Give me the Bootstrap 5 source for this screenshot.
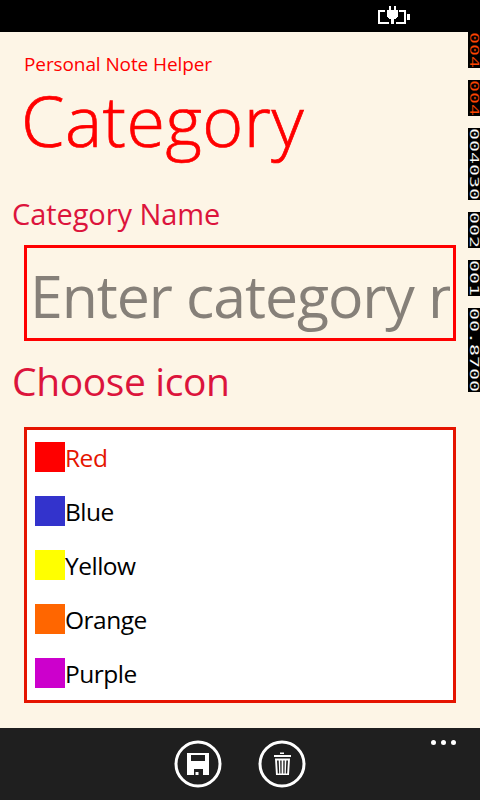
<!DOCTYPE html>
<html lang="en">
<head>
<meta charset="utf-8">
<meta name="viewport" content="width=device-width, initial-scale=1">
<title>Personal Note Helper</title>
<link href="https://cdn.jsdelivr.net/npm/bootstrap@5.3.0/dist/css/bootstrap.min.css" rel="stylesheet">
<style>
body{width:480px;height:800px;background:#fdf5e6;font-family:"Open Sans","Noto Sans",sans-serif;color:#000}
.status{height:32px;background:#000}
.battery{margin:6px 0 0 378px}
.app-name{margin:20px 0 0 24px;font-size:19px;line-height:24px;color:#f00;letter-spacing:-.1px}
.page-title{margin:4px 0 0 21px;font-size:70px;font-weight:300;line-height:80px;color:#f00;letter-spacing:.5px;-webkit-text-stroke:.7px #f00}
.lbl{margin-left:12px;color:#dc143c;white-space:nowrap}
.lbl-name{margin-top:34px;font-size:29px;line-height:40px;letter-spacing:-.08px}
.lbl-icon{margin-top:15px;font-size:39px;line-height:50px;letter-spacing:-.4px}
.name-input{width:432px;height:96px;margin:11px 0 0 24px;border:3px solid #f00;background:transparent;padding:4px 3px 0 3px;font-size:59px;line-height:80px;letter-spacing:-1.080px;outline:0}
.name-input::placeholder{color:#868079;opacity:1}
.icons{width:432px;height:276px;margin:21px 0 0 24px;border:3px solid #e51400;background:#fff;padding:12px 8px 0;overflow:hidden}
.icons li{height:30px;margin-bottom:24px;font-size:24.5px;line-height:32px;letter-spacing:-.5px}
.icons li.sel{color:#e51400}
.swatch{width:30px;height:30px}
.s-red{background:#f00}.s-blue{background:#33c}.s-yellow{background:#ff0}.s-orange{background:#f60}.s-purple{background:#c0c}
.app-bar{height:72px;background:#1f1f1f;gap:36px}
.app-bar button{width:48px;height:48px}
.more{right:23px;top:12px}
.counters{top:32px;left:468px;width:12px;font-family:"DejaVu Sans Mono",monospace}
.counter{width:12px;background:#000;color:#fff;margin-bottom:12px}
.counter span{display:block;writing-mode:vertical-rl;font-size:13px;line-height:12px;width:12px;transform:scaleY(1.533);transform-origin:0 0;-webkit-text-stroke:.12px #000}
.counter.hot{color:#ff4500}
.n3{height:36px}.n6{height:72px}.n7{height:84px}
</style>
</head>
<body class="position-relative overflow-hidden d-flex flex-column">
<header class="status flex-shrink-0">
<svg class="battery d-block" width="33" height="19" shape-rendering="crispEdges" fill="#fff">
<path fill-rule="evenodd" d="M0 4h28v14H0zM2 6v10h24V6zM29 8h3v6h-3z"/>
<path fill="#000" d="M7 4h14v7h-1v2h-2v5h-7v-5H9v-2H7z"/>
<path d="M11 0h2v4h3V0h2v4h2v7h-1v1h-1v1h-2v5h-3v-5h-2v-1h-1v-1h-1V4h2z"/>
</svg>
</header>
<main class="flex-grow-1">
<div class="app-name">Personal Note Helper</div>
<h1 class="page-title">Category</h1>
<label class="lbl lbl-name d-block" for="name">Category Name</label>
<input class="name-input d-block rounded-0" id="name" type="text" placeholder="Enter category name">
<div class="lbl lbl-icon">Choose icon</div>
<ul class="icons list-unstyled">
<li class="d-flex sel"><span class="swatch s-red"></span>Red</li>
<li class="d-flex"><span class="swatch s-blue"></span>Blue</li>
<li class="d-flex"><span class="swatch s-yellow"></span>Yellow</li>
<li class="d-flex"><span class="swatch s-orange"></span>Orange</li>
<li class="d-flex"><span class="swatch s-purple"></span>Purple</li>
</ul>
</main>
<footer class="app-bar position-relative d-flex flex-shrink-0 justify-content-center align-items-center">
<button class="btn p-0 border-0 d-flex" aria-label="Save"><svg width="48" height="48"><circle cx="24" cy="24" r="22" fill="none" stroke="#fff" stroke-width="3"/><path fill="#fff" fill-rule="evenodd" d="M13 13h22v22h-6v-6h-9v6h-7zM17 15v6h14v-6zM21.500 32h3v3h-3z"/></svg></button>
<button class="btn p-0 border-0 d-flex" aria-label="Delete"><svg width="48" height="48"><circle cx="24" cy="24" r="22" fill="none" stroke="#fff" stroke-width="3"/><path fill="#fff" fill-rule="evenodd" d="M22 12.500h4v1.500h-4zM16 15h17v2H16zM17 18.500h15l-1 16.500H18zM19 20.500l.8 13h1.400l-.5-13zM22.200 20.500l.2 13h1.200v-13zM25.300 20.500v13h1.200l.2-13zM28.300 20.500l-.5 13h1.400l.8-13z"/></svg></button>
<svg class="more position-absolute" width="26" height="5" fill="#fff"><circle cx="2.500" cy="2.500" r="2.500"/><circle cx="12.500" cy="2.500" r="2.500"/><circle cx="22.500" cy="2.500" r="2.500"/></svg>
</footer>
<aside class="counters position-absolute">
<div class="counter n3 hot"><span>004</span></div>
<div class="counter n3 hot"><span>004</span></div>
<div class="counter n6"><span>004030</span></div>
<div class="counter n3"><span>002</span></div>
<div class="counter n3"><span>001</span></div>
<div class="counter n7"><span>00.8700</span></div>
</aside>
<script src="https://cdn.jsdelivr.net/npm/bootstrap@5.3.0/dist/js/bootstrap.bundle.min.js"></script>
</body>
</html>
